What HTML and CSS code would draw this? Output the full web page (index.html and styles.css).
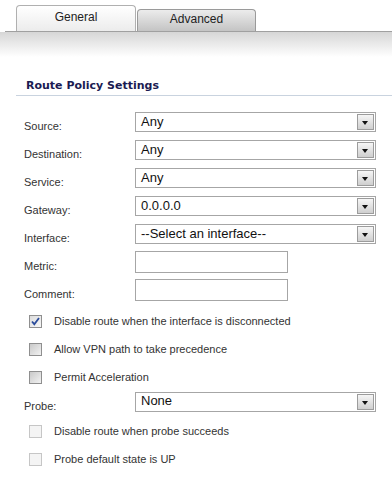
FILE: index.html
```html
<!DOCTYPE html>
<html lang="en">
<head>
  <meta charset="UTF-8" />
  <title>Route Policy Settings</title>
  <link rel="stylesheet" href="styles.css">
</head>
<body>
  <div class="tabs">
    <div class="tab active">General</div>
    <div class="tab">Advanced</div>
  </div>
  <div class="tabband"></div>

  <h2 class="heading">Route Policy Settings</h2>

  <div class="form">
    <div class="row">
      <label>Source:</label>
      <div class="select"><span>Any</span><i class="arrow"></i></div>
    </div>
    <div class="row">
      <label>Destination:</label>
      <div class="select"><span>Any</span><i class="arrow"></i></div>
    </div>
    <div class="row">
      <label>Service:</label>
      <div class="select"><span>Any</span><i class="arrow"></i></div>
    </div>
    <div class="row">
      <label>Gateway:</label>
      <div class="select"><span>0.0.0.0</span><i class="arrow"></i></div>
    </div>
    <div class="row">
      <label>Interface:</label>
      <div class="select"><span>--Select an interface--</span><i class="arrow"></i></div>
    </div>
    <div class="row">
      <label>Metric:</label>
      <div class="textbox"></div>
    </div>
    <div class="row">
      <label>Comment:</label>
      <div class="textbox"></div>
    </div>

    <div class="check first">
      <span class="box checked">
        <svg width="11" height="11" viewBox="0 0 11 11"><path d="M2 5.5 L4.3 8.2 L9 2" fill="none" stroke="#2b4c9b" stroke-width="1.8"/></svg>
      </span>
      <span>Disable route when the interface is disconnected</span>
    </div>
    <div class="check">
      <span class="box"></span>
      <span>Allow VPN path to take precedence</span>
    </div>
    <div class="check">
      <span class="box"></span>
      <span>Permit Acceleration</span>
    </div>

    <div class="row probe">
      <label>Probe:</label>
      <div class="select"><span>None</span><i class="arrow"></i></div>
    </div>

    <div class="check after-probe">
      <span class="box disabled"></span>
      <span>Disable route when probe succeeds</span>
    </div>
    <div class="check">
      <span class="box disabled"></span>
      <span>Probe default state is UP</span>
    </div>
  </div>
</body>
</html>
```

FILE: styles.css
```css
body {
  margin: 0;
  background: #fff;
  font-family: "Liberation Sans", Arial, sans-serif;
  font-size: 11px;
  color: #333;
  overflow: hidden;
}

/* tabs */
.tabs {
  display: flex;
  align-items: flex-end;
  margin-left: 5px;
  padding: 5px 0 0 11px;
  height: 26px;
  border-bottom: 1px solid #a0a0a0;
}
.tab {
  box-sizing: border-box;
  width: 119px;
  height: 22px;
  margin-left: 1px;
  border: 1px solid #9a9a9a;
  border-bottom: none;
  border-radius: 4px 4px 0 0;
  background: linear-gradient(#ececec, #c4c4c4);
  font-size: 12px;
  color: #222;
  text-align: center;
  line-height: 19px;
}
.tab.active {
  width: 120px;
  height: 26px;
  margin-left: 0;
  border-color: #b0b0b0;
  background: linear-gradient(#ffffff, #ececec);
  line-height: 22px;
}
.tabband {
  height: 25px;
  background: linear-gradient(#d6d6d6, #ffffff);
}

/* section heading */
.heading {
  margin: 22px 0 0 16px;
  padding: 0 0 2px 10px;
  height: 14px;
  font-family: "DejaVu Sans", Verdana, sans-serif;
  font-size: 11px;
  font-weight: bold;
  line-height: 14px;
  color: #1b1b52;
  border-bottom: 1px solid #c9d3df;
}

/* form rows */
.form {
  margin-top: 12px;
}
.row {
  display: flex;
  align-items: center;
  height: 28px;
  padding-left: 24px;
}
.row label {
  width: 111px;
  padding-top: 8px;
  flex-shrink: 0;
}
.row.probe {
  margin-top: -3px;
  height: 27px;
}
.select {
  box-sizing: border-box;
  display: flex;
  align-items: center;
  justify-content: space-between;
  width: 241px;
  height: 20px;
  border: 1px solid #a6a6a6;
  padding: 0 1px 0 5px;
  font-size: 13px;
  color: #111;
}
.select span {
  margin-top: -2px;
}
.arrow {
  box-sizing: border-box;
  position: relative;
  width: 17px;
  height: 16px;
  border: 1px solid #9c9c9c;
  background: linear-gradient(#f6f6f6, #cfcfcf);
}
.arrow::after {
  content: "";
  position: absolute;
  left: 4px;
  top: 6px;
  border-left: 3.5px solid transparent;
  border-right: 3.5px solid transparent;
  border-top: 4px solid #111;
}
.textbox {
  box-sizing: border-box;
  width: 153px;
  height: 22px;
  border: 1px solid #a6a6a6;
}

/* checkbox rows */
.check {
  display: flex;
  align-items: center;
  gap: 12px;
  height: 28px;
  padding-left: 29px;
}
.check.first {
  margin-top: 3px;
}
.check.after-probe {
  margin-top: 2px;
}
.box {
  box-sizing: border-box;
  display: flex;
  align-items: center;
  justify-content: center;
  width: 13px;
  height: 13px;
  border: 1px solid #8f8f8f;
  background: linear-gradient(135deg, #c9c9c9, #f2f2f2);
}
.box.checked {
  background: linear-gradient(135deg, #dcdcdc, #f7f7f7);
}
.box.disabled {
  border-color: #c6c6c6;
  background: #f4f4f4;
}
```
